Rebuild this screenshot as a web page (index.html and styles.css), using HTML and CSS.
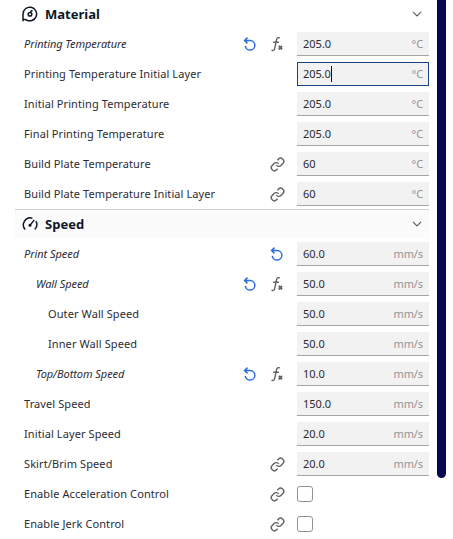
FILE: index.html
```
<!DOCTYPE html>
<html lang="en">
<head>
<meta charset="utf-8">
<title>Print settings</title>
<link rel="stylesheet" href="styles.css">
</head>
<body>
<svg class="defs" aria-hidden="true">
  <symbol id="reset" viewBox="0 0 14 16"><path d="M1.6 4.5H7.2a4.8 4.8 0 1 1-4.9 5.3M4.5 1.6 1.6 4.5l2.9 2.9"/></symbol>
  <symbol id="fx" viewBox="0 0 14 16"><path d="M9.8 2C8 1.1 6.9 2 6.5 4L4.7 12.3C4.3 14.2 3.3 14.9 1.5 14.3M3.1 6.2h5.8"/><path d="m8.8 9.9 3.2 3.4m0-3.4-3.2 3.4" stroke-width="1.9"/></symbol>
  <symbol id="link" viewBox="0 0 24 24"><path d="M10 13a5 5 0 0 0 7.54.54l3-3a5 5 0 0 0-7.07-7.07l-1.72 1.71M14 11a5 5 0 0 0-7.54-.54l-3 3a5 5 0 0 0 7.07 7.07l1.71-1.71"/></symbol>
  <symbol id="chevron" viewBox="0 0 10 6"><path d="m.9.9 4.1 4.1L9.1.9"/></symbol>
</svg>
<main class="panel">
  <div class="settings">
    <section>
      <h2 class="category">
        <svg class="category-icon" viewBox="0 0 16 16"><path d="M1 15.2V8a6.8 6.8 0 1 1 3.2 5.8L1.3 13.2"/><circle cx="8" cy="8.2" r="1.8"/><path d="M8.6 6.4c.3-1.2.9-1.8 2-1.8"/></svg>
        <span>Material</span>
        <svg class="chevron"><use href="#chevron"/></svg>
      </h2>
      <div class="row changed"><span class="name">Printing Temperature</span><svg class="icon reset"><use href="#reset"/></svg><svg class="icon fx"><use href="#fx"/></svg><div class="field"><span>205.0</span><span class="unit">°C</span></div></div>
      <div class="row"><span class="name">Printing Temperature Initial Layer</span><div class="field focused"><span class="caret">205.0</span><span class="unit">°C</span></div></div>
      <div class="row"><span class="name">Initial Printing Temperature</span><div class="field"><span>205.0</span><span class="unit">°C</span></div></div>
      <div class="row"><span class="name">Final Printing Temperature</span><div class="field"><span>205.0</span><span class="unit">°C</span></div></div>
      <div class="row"><span class="name">Build Plate Temperature</span><svg class="icon link"><use href="#link"/></svg><div class="field"><span>60</span><span class="unit">°C</span></div></div>
      <div class="row"><span class="name">Build Plate Temperature Initial Layer</span><svg class="icon link"><use href="#link"/></svg><div class="field"><span>60</span><span class="unit">°C</span></div></div>
    </section>
    <section>
      <h2 class="category shaded">
        <svg class="category-icon" viewBox="0 0 16 16"><path d="M3.2 13.4A6.9 6.9 0 0 1 10.4 2.2M13.9 5.2a6.9 6.9 0 0 1-1.1 8.2M12.3 3.9 8.3 8.9"/><circle class="solid" cx="8" cy="9.2" r=".8"/></svg>
        <span>Speed</span>
        <svg class="chevron"><use href="#chevron"/></svg>
      </h2>
      <div class="row changed"><span class="name">Print Speed</span><svg class="icon reset"><use href="#reset"/></svg><div class="field"><span>60.0</span><span class="unit">mm/s</span></div></div>
      <div class="row changed level-1"><span class="name">Wall Speed</span><svg class="icon reset"><use href="#reset"/></svg><svg class="icon fx"><use href="#fx"/></svg><div class="field"><span>50.0</span><span class="unit">mm/s</span></div></div>
      <div class="row level-2"><span class="name">Outer Wall Speed</span><div class="field"><span>50.0</span><span class="unit">mm/s</span></div></div>
      <div class="row level-2"><span class="name">Inner Wall Speed</span><div class="field"><span>50.0</span><span class="unit">mm/s</span></div></div>
      <div class="row changed level-1"><span class="name">Top/Bottom Speed</span><svg class="icon reset"><use href="#reset"/></svg><svg class="icon fx"><use href="#fx"/></svg><div class="field"><span>10.0</span><span class="unit">mm/s</span></div></div>
      <div class="row"><span class="name">Travel Speed</span><div class="field"><span>150.0</span><span class="unit">mm/s</span></div></div>
      <div class="row"><span class="name">Initial Layer Speed</span><div class="field"><span>20.0</span><span class="unit">mm/s</span></div></div>
      <div class="row"><span class="name">Skirt/Brim Speed</span><svg class="icon link"><use href="#link"/></svg><div class="field"><span>20.0</span><span class="unit">mm/s</span></div></div>
      <div class="row"><span class="name">Enable Acceleration Control</span><svg class="icon link"><use href="#link"/></svg><div class="toggle"><span class="checkbox"></span></div></div>
      <div class="row"><span class="name">Enable Jerk Control</span><svg class="icon link"><use href="#link"/></svg><div class="toggle"><span class="checkbox"></span></div></div>
    </section>
  </div>
  <div class="scrollbar"></div>
</main>
</body>
</html>
```
FILE: styles.css
```
* { box-sizing: border-box; }
body {
  margin: 0;
  height: 539px;
  overflow: hidden;
  background: #fff;
  color: #2b2b33;
  font: 11px/18px "Noto Sans", sans-serif;
}
svg { fill: none; stroke: currentColor; flex: none; }
.defs { display: none; }
.panel { display: flex; gap: 8px; padding-left: 15px; margin-top: -1px; }
.settings { width: 414px; }
.category {
  display: flex;
  align-items: center;
  gap: 7px;
  height: 30px;
  margin: 0;
  padding: 0 7px;
  font-size: 13px;
  font-weight: 700;
  color: #0e1726;
}
.category.shaded { background: #fbfbfb; box-shadow: inset 0 1px #cfd1d2; }
.category-icon { width: 16px; height: 16px; stroke-width: 1.5; }
.solid { fill: currentColor; }
.chevron { width: 10px; height: 6px; margin-left: auto; color: #5c5c60; stroke-width: 1.1; }
.row { display: flex; align-items: center; height: 30px; padding-left: 9px; }
.level-1 { padding-left: 21px; }
.level-2 { padding-left: 33px; }
.name { flex: 1; white-space: nowrap; letter-spacing: .095px; }
.changed .name { font-style: italic; letter-spacing: -.06px; }
.icon { width: 14px; height: 16px; margin-right: 13px; color: #626266; stroke-width: 1.4; }
.icon.reset { color: #2b6be0; stroke-width: 1.5; }
.icon.link { width: 15px; height: 15px; margin-right: 12.5px; stroke-width: 2.3; }
.field {
  display: flex;
  justify-content: space-between;
  align-items: center;
  width: 132px;
  height: 24px;
  padding: 1px 6px 0;
  background: #f2f2f2;
  border-bottom: 1px solid #a5a5a8;
}
.field.focused { border: 1px solid #174185; padding: 0 5px; }
.caret { border-right: 1px solid #111; line-height: 16px; margin-right: -1px; letter-spacing: -.1px; }
.unit { color: #929296; letter-spacing: -.1px; }
.toggle { width: 132px; display: flex; }
.checkbox { width: 16px; height: 16px; border: 1px solid #929294; border-radius: 3px; background: #fff; }
.scrollbar { width: 9px; height: 479px; border-radius: 0 0 4.5px 4.5px; background: #08074f; }
```
